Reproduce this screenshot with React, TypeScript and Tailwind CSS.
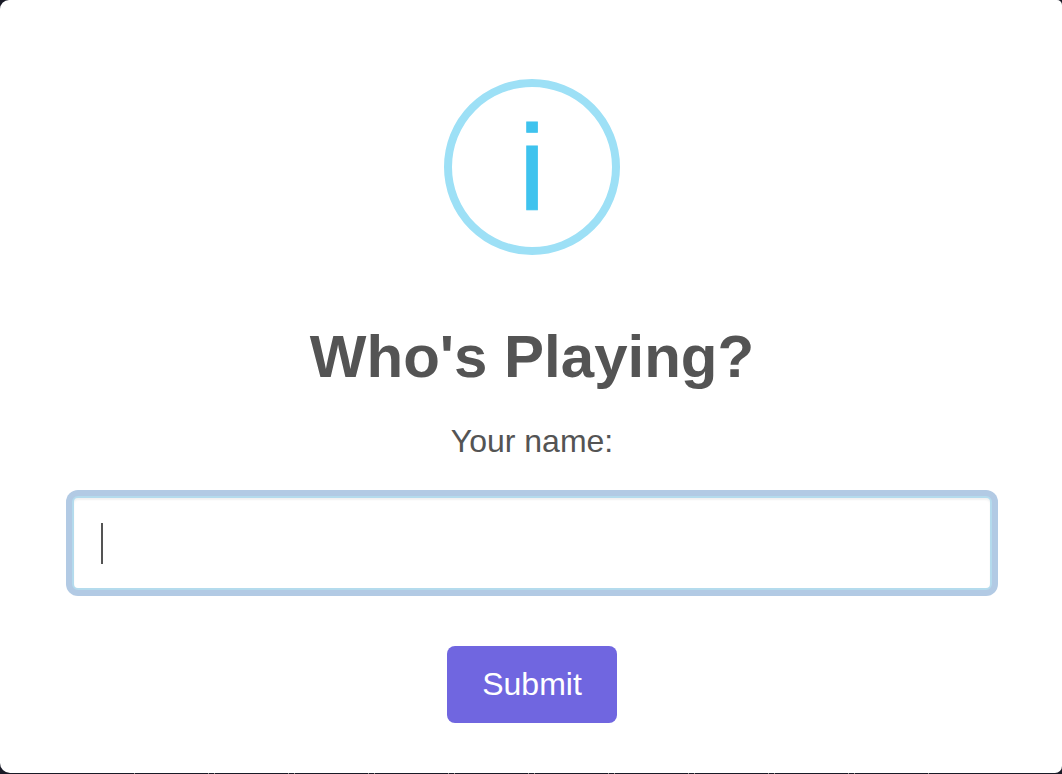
import { useState } from "react";

const stripCells = Array.from({ length: 10 }, (_, index) => index);

export default function App() {
  const [name, setName] = useState("");

  return (
    <div className="flex min-h-screen flex-col overflow-hidden bg-[#191a26] font-['Liberation_Sans',Arial,sans-serif] text-[#545454]">
      <form
        role="dialog"
        aria-labelledby="dialog-title"
        onSubmit={(event) => event.preventDefault()}
        className="flex grow flex-col items-center rounded-tl-[9px] rounded-tr-[5px] rounded-br-[7px] rounded-bl-[10px] bg-white pt-[79px] pr-[70px] pb-[50px] pl-[72px]"
      >
        <div
          aria-hidden="true"
          className="flex size-[176px] items-center justify-center rounded-full border-8 border-[#9de0f6] text-[120px] leading-[160px] text-[#3fc3ee] [-webkit-text-stroke:1px_#3fc3ee]"
        >
          i
        </div>
        <h1 id="dialog-title" className="mt-[67px] text-[60px] leading-[70px] font-bold">
          Who's Playing?
        </h1>
        <label htmlFor="player-name" className="mt-[31px] text-[32px] leading-9">
          Your name:
        </label>
        <div className="relative mt-[37px] w-full">
          <input
            id="player-name"
            type="text"
            autoComplete="off"
            value={name}
            onChange={(event) => setName(event.target.value)}
            className="block h-[94px] w-full rounded-md border-2 border-[#b4dbed] bg-white px-[27px] text-[36px] shadow-[inset_0_2px_2px_rgba(0,0,0,0.06),0_0_0_6px_#b2cae4] outline-none"
          />
          {name === "" && (
            <span
              aria-hidden="true"
              className="pointer-events-none absolute top-[27px] left-[29px] h-[41px] w-[2px] bg-[#545454]"
            />
          )}
        </div>
        <button
          type="submit"
          className="mt-14 rounded-lg bg-[#7066e0] px-[35px] py-5 text-[32px] leading-[37px] text-white"
        >
          Submit
        </button>
      </form>
      <div aria-hidden="true" className="flex h-px gap-[5px] pl-[134px]">
        {stripCells.map((cell) => (
          <span key={cell} className="w-[75px] border-x border-[#92948f]" />
        ))}
      </div>
    </div>
  );
}
